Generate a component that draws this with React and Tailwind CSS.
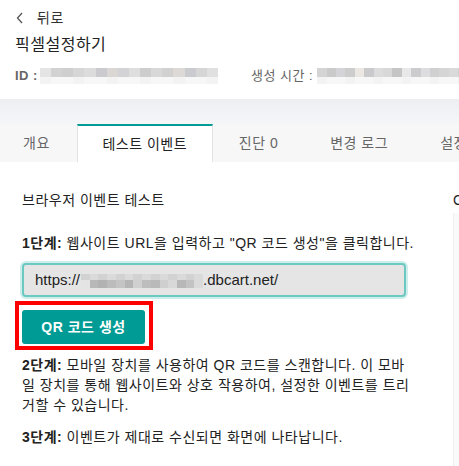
import React from 'react'

const FONT = { fontFamily: '"Liberation Sans", "Noto Sans CJK KR", sans-serif' }

const BLUR_TOP = ['bg-[#e4e4e4]', 'bg-[#d2d2d2]', 'bg-[#cfcfcf]', 'bg-[#d6d6d6]', 'bg-[#dcdcdc]', 'bg-[#cbcbcf]', 'bg-[#d9d6d3]', 'bg-[#d3d3d6]', 'bg-[#dedede]', 'bg-[#cdcdcd]', 'bg-[#d8d8d8]', 'bg-[#d1d1d1]', 'bg-[#dcd9d6]', 'bg-[#c9cbce]', 'bg-[#d6d6d6]', 'bg-[#e0e0e0]']
const BLUR_TOP2 = ['bg-[#d4d4d4]', 'bg-[#cacaca]', 'bg-[#d3d3d8]', 'bg-[#cdcdcd]', 'bg-[#ebe8e4]', 'bg-[#cacacd]', 'bg-[#dcdcdc]', 'bg-[#d8d8d8]', 'bg-[#c5c5c5]', 'bg-[#e8e8e8]', 'bg-[#cccccf]', 'bg-[#dddde0]', 'bg-[#d0d0d0]', 'bg-[#d5d5d5]', 'bg-[#dadada]', 'bg-[#d2d2d2]', 'bg-[#cfcfcf]']

function Blur({ cells, width }) {
  return (
    <div className={`flex flex-col shrink-0 ${width}`}>
      <div className="flex h-[9px]">
        {cells.map((c, i) => <div key={i} className={`flex-1 ${c}`} />)}
      </div>
      <div className="flex h-[7px]">
        {cells.map((c, i) => <div key={i} className={`flex-1 ${i % 3 === 0 ? 'bg-[#f3f3f3]' : 'bg-[#f7f7f7]'}`} />)}
      </div>
    </div>
  )
}

function UrlBlur() {
  const cells = ['bg-[#e4e4e4]', 'bg-[#b8b8b8]', 'bg-[#b2b2b2]', 'bg-[#bcbcbc]', 'bg-[#c4c4c4]', 'bg-[#b5b5b5]', 'bg-[#d0d0d0]', 'bg-[#bdbdbd]', 'bg-[#b9b9b9]', 'bg-[#cfcfcf]', 'bg-[#d8d8d8]', 'bg-[#b7b7b7]', 'bg-[#c3c3c3]', 'bg-[#dadada]']
  return (
    <div className="flex flex-col w-[122px] mt-[1px] ml-[1px]">
      <div className="flex h-[6px]">
        {cells.map((c, i) => <div key={i} className={`flex-1 ${i % 2 ? 'bg-[#dadada]' : 'bg-[#d2d2d2]'}`} />)}
      </div>
      <div className="flex h-[8px]">
        {cells.map((c, i) => <div key={i} className={`flex-1 ${c}`} />)}
      </div>
    </div>
  )
}

const TABS = ['개요', '테스트 이벤트', '진단 0', '변경 로그', '설정']

export default function App() {
  return (
    <div className="w-[459px] h-[466px] overflow-hidden bg-white text-[#222] tracking-[0.5px]" style={FONT}>
      {/* Header */}
      <div className="px-[15px] pt-[8px] h-[99px]">
        <div className="flex items-center h-[20px] text-[14px] text-[#333]">
          <svg width="8" height="12" viewBox="0 0 8 12" className="ml-[1px]">
            <path d="M6 1 L1.5 6 L6 11" fill="none" stroke="#555" strokeWidth="1.3" />
          </svg>
          <span className="ml-[13px]">뒤로</span>
        </div>
        <div className="mt-[6px] h-[22px] flex items-center text-[16px] text-[#222]">픽셀설정하기</div>
        <div className="mt-[12px] flex items-center h-[16px] text-[13px] text-[#666] whitespace-nowrap">
          <span className="font-bold shrink-0">ID :</span>
          <Blur cells={BLUR_TOP} width="w-[178px] ml-[2px]" />
          <span className="ml-[33px] shrink-0">생성 시간 :</span>
          <Blur cells={BLUR_TOP2} width="w-[160px] ml-[4px]" />
        </div>
      </div>

      {/* Band */}
      <div className="h-[25px] bg-gradient-to-b from-[#eceef2] to-[#f5f6f8]" />

      {/* Tabs */}
      <div className="flex h-[38px] bg-[#f7f7f7] text-[14px] whitespace-nowrap">
        {TABS.map((t, i) =>
          i === 1 ? (
            <div key={t} className="w-[136px] shrink-0 flex items-center justify-center bg-white border-t-2 border-[#009b94] border-x border-x-[#e3e3e3] text-[#222]">
              {t}
            </div>
          ) : (
            <div key={t} className={`shrink-0 flex items-center text-[#666] ${i === 0 ? 'pl-[23px] pr-[27px]' : 'px-[26px]'}`}>
              {t}
            </div>
          )
        )}
      </div>

      {/* Content */}
      <div className="flex pl-[22px] pt-[28px]">
        <div className="w-[392px] shrink-0 text-[14px] text-[#222]">
          <div className="h-[20px] flex items-center">브라우저 이벤트 테스트</div>
          <div className="mt-[23px] h-[20px] flex items-center whitespace-nowrap">
            <span className="font-bold">1단계:</span>&nbsp;웹사이트 URL을 입력하고 "QR 코드 생성"을 클릭합니다.
          </div>
          <div className="mt-[10px] w-[384px] h-[34px] rounded-[4px] border-2 border-[#6cc9c1] ring-2 ring-[#cdeeea] bg-[#e5e5e5] flex items-center pl-[11px] text-[15px] text-[#222] tracking-normal">
            <span>https://</span>
            <UrlBlur />
            <span>.dbcart.net/</span>
          </div>
          <div className="-ml-[7px] mt-[4px] w-[138px] h-[49px] border-[4px] border-[#ff0000] pl-[3px] pt-[5px]">
            <div className="w-[123px] h-[34px] rounded-[3px] bg-[#009b94] text-white font-bold text-[14px] flex items-center justify-center">
              QR 코드 생성
            </div>
          </div>
          <p className="mt-[5px] leading-[20px] w-[392px]">
            <span className="font-bold">2단계:</span> 모바일 장치를 사용하여 QR 코드를 스캔합니다. 이 모바일 장치를 통해 웹사이트와 상호 작용하여, 설정한 이벤트를 트리거할 수 있습니다.
          </p>
          <p className="mt-[12px] leading-[20px]">
            <span className="font-bold">3단계:</span> 이벤트가 제대로 수신되면 화면에 나타납니다.
          </p>
        </div>
        <div className="ml-[39px] shrink-0 w-[200px]">
          <div className="h-[20px] flex items-center text-[14px] text-[#222]">Checklist</div>
          <div className="mt-[3px] h-[300px] bg-[#fafafa] border-l border-[#eeeeee]" />
        </div>
      </div>
    </div>
  )
}
